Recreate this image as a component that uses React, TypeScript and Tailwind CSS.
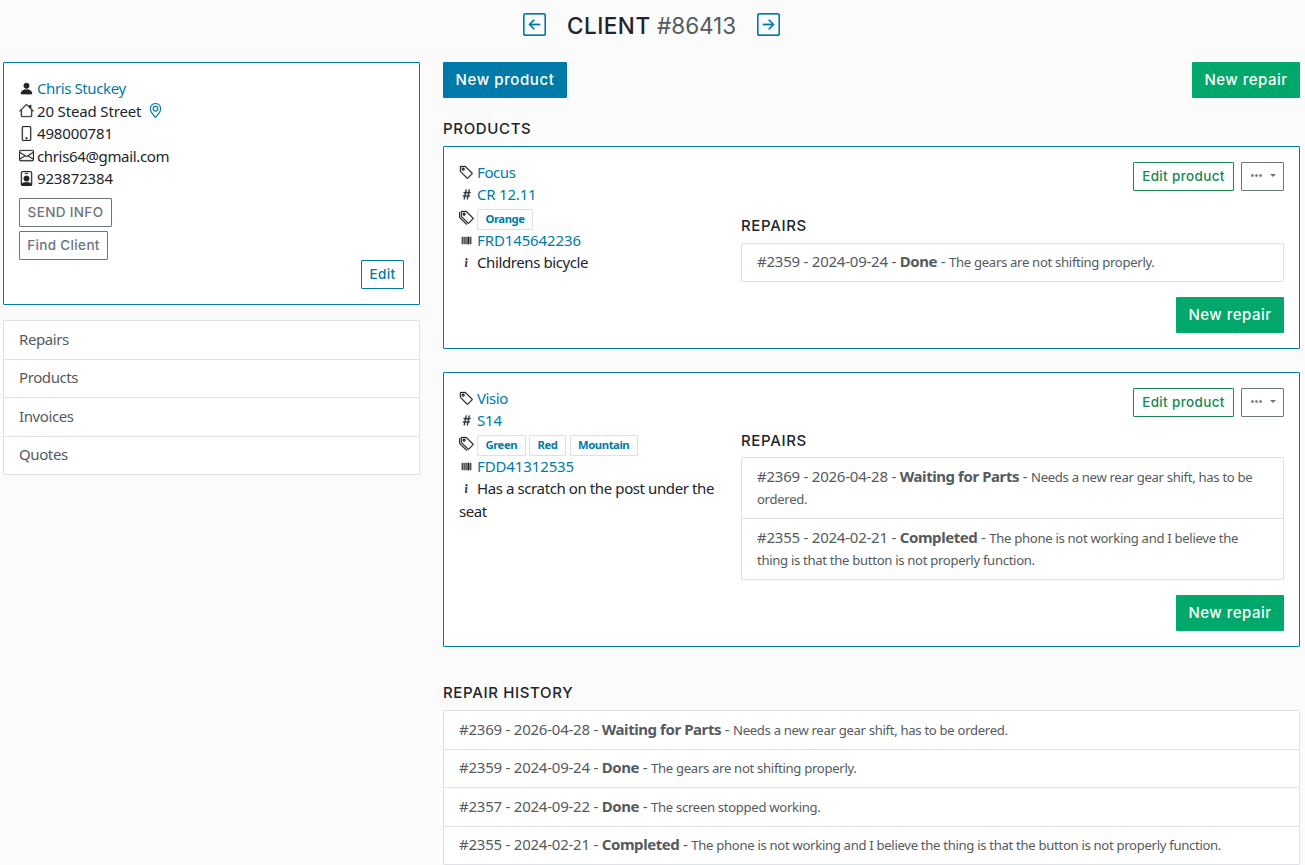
import type { ReactNode } from "react";
import clsx from "clsx";
import {
  BsArrowLeftSquare,
  BsArrowRightSquare,
  BsEnvelope,
  BsGeoAlt,
  BsHash,
  BsHouse,
  BsInfo,
  BsPersonBadge,
  BsPersonFill,
  BsPhone,
  BsTag,
  BsTags,
  BsThreeDots,
  BsUpc,
} from "react-icons/bs";

type Repair = {
  id: number;
  date: string;
  status: string;
  note: string;
};

type Product = {
  name: string;
  model: string;
  tags: string[];
  serial: string;
  description: string;
  repairs: Repair[];
};

const repairs: Repair[] = [
  { id: 2369, date: "2026-04-28", status: "Waiting for Parts", note: "Needs a new rear gear shift, has to be ordered." },
  { id: 2359, date: "2024-09-24", status: "Done", note: "The gears are not shifting properly." },
  { id: 2357, date: "2024-09-22", status: "Done", note: "The screen stopped working." },
  {
    id: 2355,
    date: "2024-02-21",
    status: "Completed",
    note: "The phone is not working and I believe the thing is that the button is not properly function.",
  },
];

const products: Product[] = [
  {
    name: "Focus",
    model: "CR 12.11",
    tags: ["Orange"],
    serial: "FRD145642236",
    description: "Childrens bicycle",
    repairs: [repairs[1]],
  },
  {
    name: "Visio",
    model: "S14",
    tags: ["Green", "Red", "Mountain"],
    serial: "FDD41312535",
    description: "Has a scratch on the post under the seat",
    repairs: [repairs[0], repairs[3]],
  },
];

const heading = "font-['Inter',sans-serif] font-medium text-[#212529]";
const sectionTitle = "text-[15px] leading-[18px] tracking-[0.65px]";
const smallButton = "h-[29px] border text-[13.5px] tracking-[0.35px]";

const Button = ({ className, children }: { className: string; children: ReactNode }) => (
  <button
    className={clsx(
      "flex shrink-0 items-center justify-center whitespace-nowrap rounded-[1px] font-['Inter',sans-serif] font-medium",
      className
    )}
  >
    {children}
  </button>
);

const NewRepair = () => (
  <Button className="h-9 w-[108px] bg-[#00a86b] text-[15px] tracking-[0.5px] text-white">New repair</Button>
);

const InfoRow = ({ icon, className, children }: { icon: ReactNode; className?: string; children: ReactNode }) => (
  <div className={clsx("flex items-center whitespace-nowrap", className ?? "h-[22.5px]")}>
    <span className="-ml-[0.5px] mr-[3.5px] flex w-[15px] shrink-0 [&_svg]:stroke-[0.3]">{icon}</span>
    {children}
  </div>
);

const RepairList = ({ items }: { items: Repair[] }) => (
  <ul className="divide-y divide-[#dee2e6] rounded-[1px] border border-[#dee2e6] bg-white text-[#555a5e]">
    {items.map((repair) => (
      <li key={repair.id} className="px-[15px] pt-[6.75px] pb-[8.25px] leading-[22.5px] tracking-[-0.23px]">
        {`#${repair.id} - ${repair.date} - `}
        <b className="tracking-[-0.43px]">{repair.status}</b>
        {" - "}
        <span className="text-[13.125px] leading-none tracking-[-0.31px]">{repair.note}</span>
      </li>
    ))}
  </ul>
);

const ProductCard = ({ product, first }: { product: Product; first: boolean }) => (
  <div className="flex justify-between rounded-[1px] border border-[#007aa8] bg-white p-[15px]">
    <div className="-mt-[0.5px] w-[262px]">
      <InfoRow icon={<BsTag />} className="h-[22px]">
        <a className="text-[#007aa8]">{product.name}</a>
      </InfoRow>
      <InfoRow icon={<BsHash />} className="h-[22px]">
        <a className="tracking-[-0.2px] text-[#007aa8]">{product.model}</a>
      </InfoRow>
      <div className="flex h-6 items-center">
        <BsTags className="-ml-[0.5px] mr-[3.5px] shrink-0 stroke-[0.3]" />
        <div className="flex gap-[3.5px] pt-[3px]">
          {product.tags.map((tag) => (
            <span
              key={tag}
              className="flex h-[21px] items-center rounded-[1px] border border-[#dee2e6] px-[7.5px] text-[11.25px] font-bold tracking-[-0.42px] text-[#007aa8]"
            >
              {tag}
            </span>
          ))}
        </div>
      </div>
      <InfoRow icon={<BsUpc />} className="h-[22px]">
        <a className="tracking-[-0.12px] text-[#007aa8]">{product.serial}</a>
      </InfoRow>
      <p className="-mt-[0.5px] leading-[22.5px]">
        <BsInfo className="-ml-[0.5px] mr-[3.5px] inline stroke-[0.3] align-[-2px]" />
        {product.description}
      </p>
    </div>
    <div className="flex w-[543px] flex-col">
      <div className="flex justify-end gap-[7px]">
        <Button className={clsx(smallButton, "w-[101px] border-[#198754] text-[#198754]")}>Edit product</Button>
        <Button className="h-[29px] w-[43px] gap-[7px] border border-[#6c757d] pb-0.5 text-[#6c757d]">
          <BsThreeDots className="size-[13px] stroke-[0.4]" />
          <span className="border-x-[3.5px] border-t-[3.5px] border-x-transparent" />
        </Button>
      </div>
      <h2 className={clsx(heading, sectionTitle, first ? "mt-[26px] mb-[7.5px]" : "mt-[15px] mb-[7px]")}>REPAIRS</h2>
      <RepairList items={product.repairs} />
      <div className="mt-[15px] flex justify-end">
        <NewRepair />
      </div>
    </div>
  </div>
);

const Sidebar = () => (
  <aside className="w-[417px] shrink-0">
    <div className="h-[243px] rounded-[1px] border border-[#007aa8] bg-white px-[15px] pt-[14px]">
      <InfoRow icon={<BsPersonFill />}>
        <a className="text-[#007aa8]">Chris Stuckey</a>
      </InfoRow>
      <InfoRow icon={<BsHouse />}>
        <span className="tracking-[-0.15px]">20 Stead Street</span>
        <BsGeoAlt className="ml-[7px] stroke-[0.3] text-[#007aa8]" />
      </InfoRow>
      <InfoRow icon={<BsPhone />}>
        <span className="tracking-[-0.15px]">498000781</span>
      </InfoRow>
      <InfoRow icon={<BsEnvelope />}>
        <span className="tracking-[-0.35px]">chris64@gmail.com</span>
      </InfoRow>
      <InfoRow icon={<BsPersonBadge />}>
        <span className="tracking-[-0.15px]">923872384</span>
      </InfoRow>
      <div className="mt-[8.5px] flex flex-col gap-1">
        <Button className={clsx(smallButton, "w-[93px] border-[#6c757d] text-[#6c757d]")}>SEND INFO</Button>
        <Button className={clsx(smallButton, "w-[89px] border-[#6c757d] text-[#6c757d]")}>Find Client</Button>
      </div>
      <div className="flex justify-end">
        <Button className={clsx(smallButton, "w-[43px] border-[#007aa8] text-[#007aa8]")}>Edit</Button>
      </div>
    </div>
    <nav className="mt-[15px] divide-y divide-[#dee2e6] rounded-[1px] border border-[#dee2e6] bg-white text-[#555a5e]">
      {["Repairs", "Products", "Invoices", "Quotes"].map((item) => (
        <a key={item} className="block px-[15px] pt-[6.75px] pb-[8.25px] leading-[22.5px]">
          {item}
        </a>
      ))}
    </nav>
  </aside>
);

const App = () => {
  return (
    <div className="h-[865px] overflow-hidden bg-[#fbfbfb] pl-[3px] pr-[5px] font-['Noto_Sans',sans-serif] text-[15px] tracking-[-0.4px] text-[#212529]">
      <header className="flex h-[62px] items-start justify-center pt-[13px]">
        <BsArrowLeftSquare className="size-[23px] stroke-[0.2] text-[#007aa8]" />
        <h1 className={clsx(heading, "-mt-px mr-[21px] ml-[21px] text-[22.5px] leading-[27px] tracking-[0.5px]")}>
          CLIENT <span className="font-normal tracking-[-0.05px] text-[#555a5e]">#86413</span>
        </h1>
        <BsArrowRightSquare className="size-[23px] stroke-[0.2] text-[#007aa8]" />
      </header>
      <div className="flex gap-[23px]">
        <Sidebar />
        <main className="w-[857px]">
          <div className="flex justify-between">
            <Button className="h-9 w-[124px] bg-[#007aa8] text-[15px] tracking-[0.6px] text-white">New product</Button>
            <NewRepair />
          </div>
          <h2 className={clsx(heading, sectionTitle, "mt-[22px] mb-2")}>PRODUCTS</h2>
          <div className="flex flex-col gap-[23px]">
            {products.map((product, i) => (
              <ProductCard key={product.name} product={product} first={i === 0} />
            ))}
          </div>
          <h2 className={clsx(heading, sectionTitle, "mt-[37px] mb-2")}>REPAIR HISTORY</h2>
          <RepairList items={repairs} />
        </main>
      </div>
    </div>
  );
};

export default App;
